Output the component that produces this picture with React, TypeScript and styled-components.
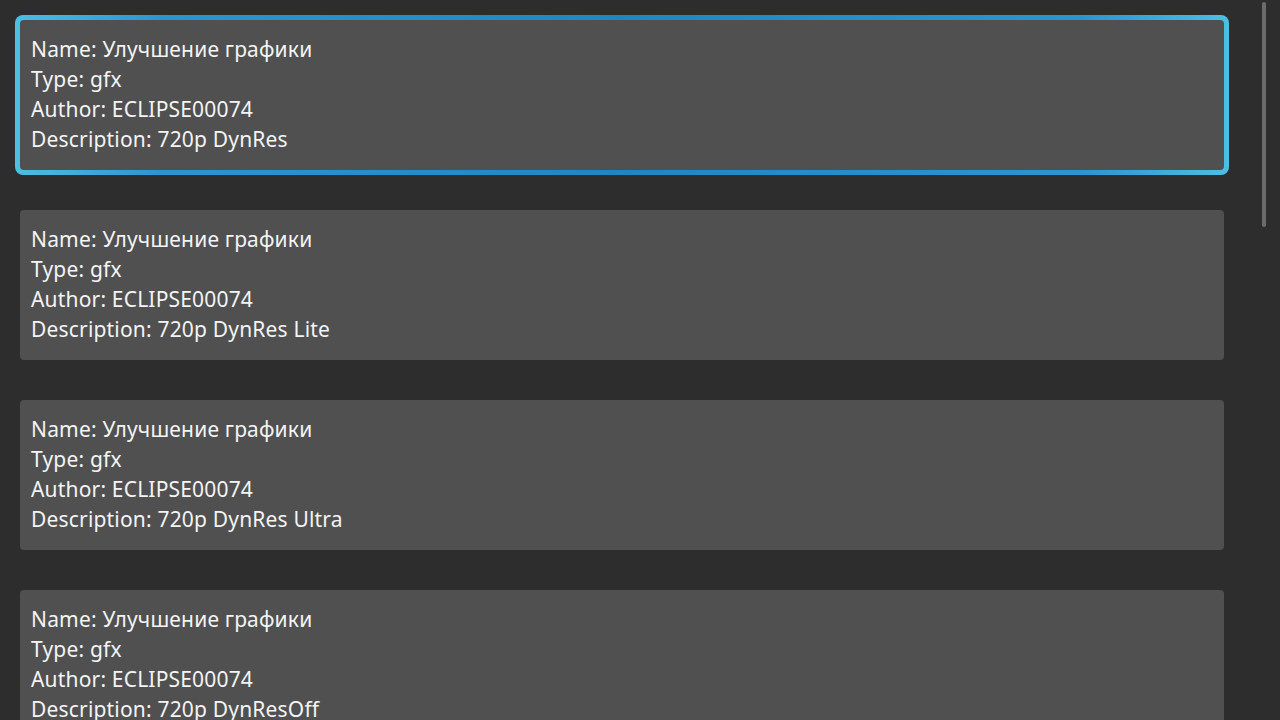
import React from "react";
import styled, { createGlobalStyle } from "styled-components";

const Global = createGlobalStyle`
  html, body { margin: 0; padding: 0; background: #2d2d2d; overflow: hidden; }
  body { font-family: "Noto Sans", "Open Sans", sans-serif; }
`;

const Page = styled.div`
  height: 720px;
  overflow: hidden;
  position: relative;
`;

const List = styled.div`
  display: flex;
  flex-direction: column;
  gap: 30px;
  padding: 15px 0 0 15px;
  width: 1214px;
`;

const Frame = styled.div<{ $selected?: boolean }>`
  padding: 5px;
  border-radius: 8px;
  background: ${(p) =>
    p.$selected
      ? "linear-gradient(90deg, #4cbfe3 0%, #2a96d0 12%, #1f86c6 50%, #2a96d0 88%, #4cbfe3 100%)"
      : "transparent"};
`;

const Card = styled.div`
  background: #505050;
  border-radius: 4px;
  height: 150px;
  box-sizing: border-box;
  padding: 14px 11px 16px;
  color: #f4f4f4;
  font-size: 21px;
  line-height: 30px;
  letter-spacing: 0.18px;
`;

const Line = styled.div`
  white-space: nowrap;
`;

const ScrollThumb = styled.div`
  position: absolute;
  left: 1262px;
  top: 2px;
  width: 4px;
  height: 225px;
  border-radius: 2px;
  background: #6c6c6c;
`;

const items = [
  "720p DynRes",
  "720p DynRes Lite",
  "720p DynRes Ultra",
  "720p DynResOff",
];

export default function App() {
  return (
    <Page>
      <Global />
      <List>
        {items.map((d, i) => (
          <Frame key={i} $selected={i === 0}>
            <Card>
              <Line>Name: Улучшение графики</Line>
              <Line>Type: gfx</Line>
              <Line>Author: ECLIPSE00074</Line>
              <Line>Description: {d}</Line>
            </Card>
          </Frame>
        ))}
      </List>
      <ScrollThumb />
    </Page>
  );
}
